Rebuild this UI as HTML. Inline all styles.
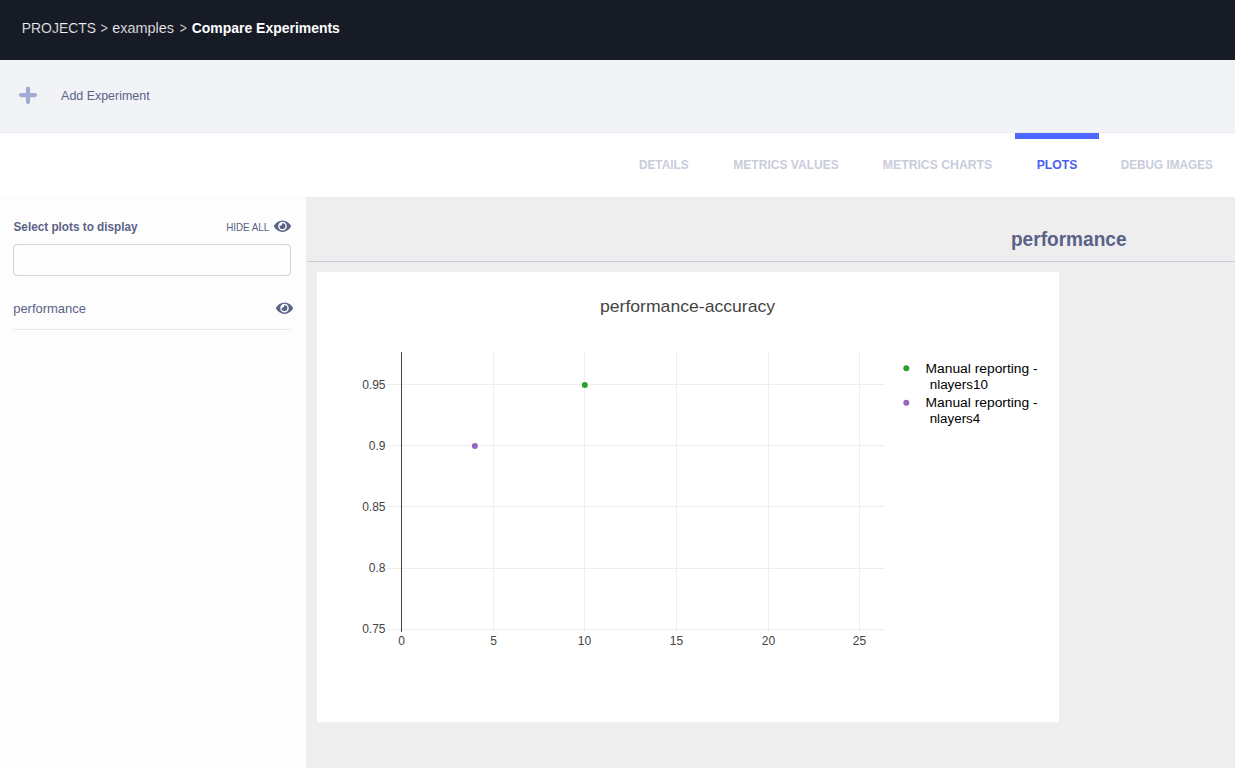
<!DOCTYPE html>
<html><head><meta charset="utf-8">
<style>
*{box-sizing:border-box;margin:0;padding:0}
html,body{width:1235px;height:768px;overflow:hidden;background:#fff;font-family:"Liberation Sans",sans-serif}
.a{position:absolute}
svg{position:absolute;left:0;top:0}
svg text{font-family:"Liberation Sans",sans-serif}
</style></head><body>
<div class="a" style="left:0;top:0;width:1235px;height:60px;background:#171b26"></div>
<div class="a" style="left:0;top:60px;width:1235px;height:73px;background:#f2f3f7"></div>
<div class="a" style="left:0;top:132px;width:1235px;height:1px;background:#ebebec"></div>
<div class="a" style="left:1015px;top:133px;width:84px;height:6px;background:#4f66ff"></div>
<div class="a" style="left:0;top:197px;width:306px;height:571px;background:#fdfdfd"></div>
<div class="a" style="left:306px;top:197px;width:929px;height:571px;background:#eeeeee"></div>
<div class="a" style="left:306px;top:197px;width:929px;height:1px;background:#ebebeb"></div>
<div class="a" style="left:307px;top:261px;width:928px;height:1px;background:#c9ccda"></div>
<div class="a" style="left:317px;top:272px;width:742px;height:450px;background:#ffffff"></div>
<div class="a" style="left:13px;top:244px;width:278px;height:32px;border:1px solid #d0d3e0;border-radius:4px;background:#fefefe"></div>
<div class="a" style="left:13px;top:329px;width:278px;height:1px;background:#e9e9ee"></div>
<svg width="1235" height="768" viewBox="0 0 1235 768">
<g stroke="#a1a9d4" stroke-width="4.2" stroke-linecap="round"><line x1="21.1" y1="95.2" x2="34.9" y2="95.2"/><line x1="28" y1="88.5" x2="28" y2="102.1"/></g>
<g fill="#5a6288">
<path transform="translate(273.9,218.5) scale(0.02986)" d="M572.52 241.4C518.29 135.59 410.93 64 288 64S57.68 135.64 3.48 241.41a32.35 32.35 0 0 0 0 29.19C57.71 376.41 165.07 448 288 448s230.32-71.64 284.52-177.41a32.35 32.35 0 0 0 0-29.19zM288 400a144 144 0 1 1 144-144 143.93 143.93 0 0 1-144 144zm0-240a95.31 95.31 0 0 0-25.31 3.79 47.85 47.85 0 0 1-66.9 66.9A95.78 95.78 0 1 0 288 160z"/>
<path transform="translate(275.9,300.5) scale(0.02986)" d="M572.52 241.4C518.29 135.59 410.93 64 288 64S57.68 135.64 3.48 241.41a32.35 32.35 0 0 0 0 29.19C57.71 376.41 165.07 448 288 448s230.32-71.64 284.52-177.41a32.35 32.35 0 0 0 0-29.19zM288 400a144 144 0 1 1 144-144 143.93 143.93 0 0 1-144 144zm0-240a95.31 95.31 0 0 0-25.31 3.79 47.85 47.85 0 0 1-66.9 66.9A95.78 95.78 0 1 0 288 160z"/>
</g>
<rect x="493" y="352" width="1" height="280" fill="#eeeeee"/>
<rect x="584" y="352" width="1" height="280" fill="#eeeeee"/>
<rect x="676" y="352" width="1" height="280" fill="#eeeeee"/>
<rect x="768" y="352" width="1" height="280" fill="#eeeeee"/>
<rect x="859" y="352" width="1" height="280" fill="#eeeeee"/>
<rect x="387" y="384" width="497" height="1" fill="#eeeeee"/>
<rect x="387" y="445" width="497" height="1" fill="#eeeeee"/>
<rect x="387" y="506" width="497" height="1" fill="#eeeeee"/>
<rect x="387" y="568" width="497" height="1" fill="#eeeeee"/>
<rect x="387" y="629" width="497" height="1" fill="#eeeeee"/>
<rect x="401" y="352" width="1" height="280" fill="#444444"/>
<text x="385.5" y="388.80" font-size="12" fill="#444444" text-anchor="end">0.95</text>
<text x="385.5" y="449.80" font-size="12" fill="#444444" text-anchor="end">0.9</text>
<text x="385.5" y="510.50" font-size="12" fill="#444444" text-anchor="end">0.85</text>
<text x="385.5" y="571.80" font-size="12" fill="#444444" text-anchor="end">0.8</text>
<text x="385.5" y="632.80" font-size="12" fill="#444444" text-anchor="end">0.75</text>
<text x="401.50" y="645" font-size="12" fill="#444444" text-anchor="middle">0</text>
<text x="493.50" y="645" font-size="12" fill="#444444" text-anchor="middle">5</text>
<text x="584.50" y="645" font-size="12" fill="#444444" text-anchor="middle">10</text>
<text x="676.50" y="645" font-size="12" fill="#444444" text-anchor="middle">15</text>
<text x="768.50" y="645" font-size="12" fill="#444444" text-anchor="middle">20</text>
<text x="859.50" y="645" font-size="12" fill="#444444" text-anchor="middle">25</text>
<circle cx="474.9" cy="445.9" r="3" fill="#9467bd"/>
<circle cx="584.8" cy="384.9" r="3" fill="#2ca02c"/>
<circle cx="906.3" cy="368.3" r="3" fill="#2ca02c"/>
<circle cx="906.3" cy="402.7" r="3" fill="#9467bd"/>
<text x="21.78" y="33.00" font-size="15.2" font-weight="normal" fill="#f2f3f7" textLength="74.23" lengthAdjust="spacingAndGlyphs" stroke="#171b26" stroke-width="0.2">PROJECTS</text>
<text x="100.40" y="33.00" font-size="15.2" font-weight="normal" fill="#f2f3f7" textLength="7.32" lengthAdjust="spacingAndGlyphs" stroke="#171b26" stroke-width="0.2">&gt;</text>
<text x="112.20" y="33.00" font-size="15.2" font-weight="normal" fill="#f2f3f7" textLength="61.80" lengthAdjust="spacingAndGlyphs" stroke="#171b26" stroke-width="0.2">examples</text>
<text x="179.80" y="33.00" font-size="15.2" font-weight="normal" fill="#f2f3f7" textLength="7.10" lengthAdjust="spacingAndGlyphs" stroke="#171b26" stroke-width="0.2">&gt;</text>
<text x="191.70" y="33.00" font-size="15.2" font-weight="bold" fill="#ffffff" textLength="148.20" lengthAdjust="spacingAndGlyphs">Compare Experiments</text>
<text x="61.10" y="100.20" font-size="13" font-weight="normal" fill="#5a6288" textLength="88.52" lengthAdjust="spacingAndGlyphs">Add Experiment</text>
<text x="638.89" y="169.10" font-size="13" font-weight="bold" fill="#c9ccdb" textLength="49.80" lengthAdjust="spacingAndGlyphs">DETAILS</text>
<text x="733.27" y="169.10" font-size="13" font-weight="bold" fill="#c9ccdb" textLength="105.63" lengthAdjust="spacingAndGlyphs">METRICS VALUES</text>
<text x="882.86" y="169.10" font-size="13" font-weight="bold" fill="#c9ccdb" textLength="109.30" lengthAdjust="spacingAndGlyphs">METRICS CHARTS</text>
<text x="1036.66" y="169.10" font-size="13" font-weight="bold" fill="#4b5ff0" textLength="40.76" lengthAdjust="spacingAndGlyphs">PLOTS</text>
<text x="1120.80" y="169.10" font-size="13" font-weight="bold" fill="#c9ccdb" textLength="92.06" lengthAdjust="spacingAndGlyphs">DEBUG IMAGES</text>
<text x="13.50" y="231.00" font-size="13" font-weight="bold" fill="#5a6288" textLength="124.14" lengthAdjust="spacingAndGlyphs">Select plots to display</text>
<text x="226.21" y="230.90" font-size="11" font-weight="normal" fill="#5a6288" textLength="43.07" lengthAdjust="spacingAndGlyphs">HIDE ALL</text>
<text x="13.20" y="313.10" font-size="13" font-weight="normal" fill="#5a6288" textLength="72.78" lengthAdjust="spacingAndGlyphs">performance</text>
<text x="1010.95" y="245.50" font-size="20" font-weight="bold" fill="#5a6288" textLength="115.60" lengthAdjust="spacingAndGlyphs">performance</text>
<text x="599.96" y="311.90" font-size="17" font-weight="normal" fill="#444444" textLength="175.17" lengthAdjust="spacingAndGlyphs">performance-accuracy</text>
<text x="925.55" y="373.00" font-size="12" font-weight="normal" fill="#000000" textLength="112.10" lengthAdjust="spacingAndGlyphs">Manual reporting -</text>
<text x="929.68" y="389.00" font-size="12" font-weight="normal" fill="#000000" textLength="58.25" lengthAdjust="spacingAndGlyphs">nlayers10</text>
<text x="925.55" y="406.80" font-size="12" font-weight="normal" fill="#000000" textLength="112.10" lengthAdjust="spacingAndGlyphs">Manual reporting -</text>
<text x="929.69" y="423.00" font-size="12" font-weight="normal" fill="#000000" textLength="50.51" lengthAdjust="spacingAndGlyphs">nlayers4</text>
</svg>
</body></html>
